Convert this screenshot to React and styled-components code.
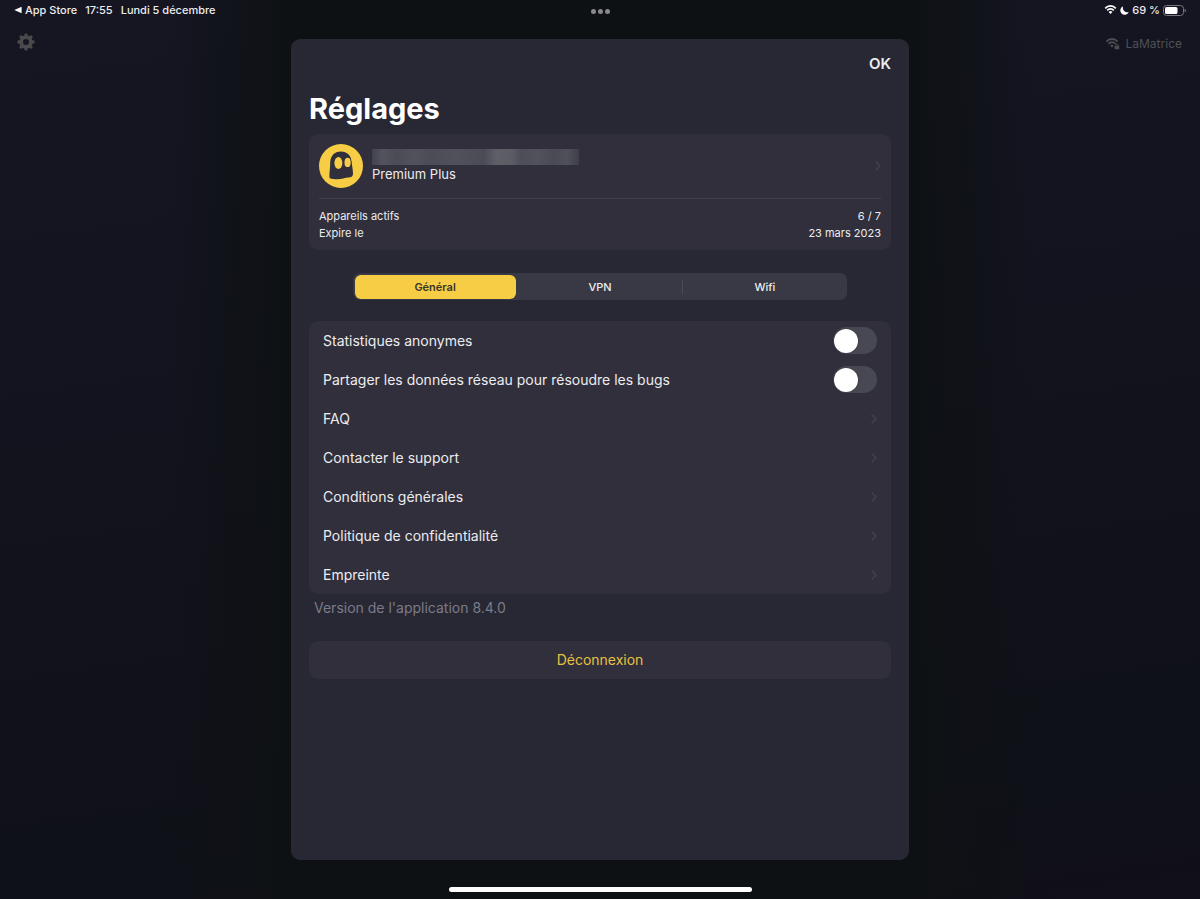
import React, { useState } from 'react';
import styled, { createGlobalStyle } from 'styled-components';

const GlobalStyle = createGlobalStyle`
  * {
    box-sizing: border-box;
  }
  body {
    margin: 0;
    background: #10111b;
    color: #ececef;
    font-family: Inter, 'Liberation Sans', sans-serif;
  }
  button {
    border: none;
    padding: 0;
    background: none;
    color: inherit;
    font: inherit;
    cursor: pointer;
  }
`;

const Screen = styled.div`
  display: flex;
  flex-direction: column;
  min-height: 100vh;
  background:
    linear-gradient(90deg, transparent 14%, #0e1114 24%, #0e1114 76%, transparent 86%),
    linear-gradient(172deg, #151622 0%, #12131d 45%, #11111a 70%, #0e1118 85%, #110f18 100%);
`;

const StatusBar = styled.header`
  display: grid;
  grid-template-columns: 1fr auto 1fr;
  align-items: center;
  height: 20px;
  padding: 0 14px;
  font-size: 11px;
  font-weight: 500;
  line-height: 14px;
`;

const StatusLeft = styled.div`
  display: flex;
  align-items: center;
  gap: 8px;
`;

const StatusRight = styled.div`
  display: flex;
  align-items: center;
  justify-content: flex-end;
  gap: 3px;
`;

const BackLink = styled.a`
  display: flex;
  align-items: center;
  gap: 3px;
  color: inherit;
  text-decoration: none;
`;

const Dots = styled.button`
  display: flex;
  gap: 2px;
  padding-top: 2px;
`;

const Dot = styled.span`
  width: 5px;
  height: 5px;
  border-radius: 50%;
  background: #89898d;
`;

const Main = styled.main`
  flex: 1;
  display: grid;
  grid-template-columns: 1fr minmax(0, 618px) 1fr;
  padding-top: 19px;
`;

const SideLeft = styled.div`
  display: flex;
  align-items: flex-start;
  padding: 0 17px;
`;

const GearButton = styled.button`
  display: flex;
  margin-top: -6px;
`;

const SideRight = styled.div`
  display: flex;
  align-items: flex-start;
  justify-content: flex-end;
  padding: 0 18px;
`;

const Network = styled.div`
  display: flex;
  align-items: center;
  gap: 6px;
  margin-top: -3px;
  color: #505057;
  font-size: 12px;
  line-height: 16px;
`;

const Panel = styled.section`
  display: flex;
  flex-direction: column;
  padding: 15px 18px;
  border-radius: 9px;
  background: #272834;
`;

const OkButton = styled.button`
  align-self: flex-end;
  font-size: 15px;
  font-weight: 600;
  line-height: 20px;
`;

const Title = styled.h1`
  margin: 17px 0 7px;
  color: #fff;
  font-size: 29px;
  font-weight: 700;
  line-height: 36px;
`;

const Card = styled.div`
  border-radius: 9px;
  background: #302f3b;
`;

const AccountCard = styled(Card)`
  padding: 10px 10px 8px;
`;

const AccountLink = styled.a`
  display: flex;
  align-items: center;
  gap: 9px;
  padding-bottom: 10px;
  border-bottom: 1px solid #41414d;
  color: inherit;
  text-decoration: none;
`;

const AccountText = styled.div`
  flex: 1;
  font-size: 13px;
  line-height: 18px;
`;

const HiddenName = styled.div`
  width: 207px;
  height: 16px;
  background: linear-gradient(
    90deg,
    #42424c 0%,
    #53535d 5%,
    #4b4b55 12%,
    #52525d 20%,
    #4c4c57 28%,
    #51515b 40%,
    #4b4b56 54%,
    #5f5f68 60%,
    #5b5b65 68%,
    #4d4d58 72%,
    #52525d 80%,
    #4a4a54 88%,
    #50505a 94%,
    #3f3f49 100%
  );
`;

const Facts = styled.dl`
  margin: 9px 0 0;
`;

const Fact = styled.div`
  display: flex;
  justify-content: space-between;
  font-size: 11px;
  line-height: 17px;

  dd {
    margin: 0;
  }
`;

const Segments = styled.div`
  display: grid;
  grid-template-columns: repeat(3, 1fr);
  align-self: center;
  align-items: center;
  width: 85%;
  height: 27px;
  margin: 23px 0 21px;
  border-radius: 7px;
  background: #393945;
`;

const SegmentCell = styled.div`
  display: flex;
  align-items: center;
  height: 15px;
  padding: 0 2px 0 1px;
  border-left: 1px solid ${({ $divided }) => ($divided ? '#4b4a56' : 'transparent')};
`;

const Segment = styled.button`
  flex: 1;
  height: 24px;
  border-radius: 6px;
  background: ${({ $active }) => ($active ? '#f7cd46' : 'none')};
  color: ${({ $active }) => ($active ? '#3a3426' : '#ececef')};
  font-size: 11px;
  font-weight: ${({ $active }) => ($active ? 600 : 500)};
  line-height: 14px;
`;

const List = styled(Card)`
  display: flex;
  flex-direction: column;
`;

const Row = styled.div`
  display: flex;
  align-items: center;
  justify-content: space-between;
  height: 39px;
  padding: 0 14px;
  color: inherit;
  font-size: 14px;
  line-height: 20px;
  text-decoration: none;
`;

const Toggle = styled.input`
  display: flex;
  align-items: center;
  appearance: none;
  width: 44px;
  height: 27px;
  margin: 0;
  padding: 0 1px;
  border-radius: 14px;
  background: ${({ checked }) => (checked ? '#f7cd46' : '#484852')};
  cursor: pointer;

  &::before {
    content: '';
    width: 24px;
    height: 24px;
    margin-left: ${({ checked }) => (checked ? '18px' : '0')};
    border-radius: 50%;
    background: #fff;
    box-shadow: 0 0 2px rgba(0, 0, 0, 0.3);
  }
`;

const Version = styled.p`
  margin: 4px 5px 23px;
  color: #7c7b87;
  font-size: 14px;
  line-height: 20px;
`;

const LogoutButton = styled.button`
  height: 38px;
  border-radius: 9px;
  background: #302f3b;
  color: #e7c03f;
  font-size: 14px;
  line-height: 20px;
`;

const Footer = styled.footer`
  display: flex;
  justify-content: center;
  padding: 27px 0 7px;
`;

const HomeBar = styled.div`
  width: 303px;
  height: 5px;
  border-radius: 3px;
  background: #fff;
`;

const Chevron = () => (
  <svg width="6" height="10" viewBox="0 0 6 10" fill="none" stroke="#43434e" strokeWidth="1.4" strokeLinecap="round" strokeLinejoin="round">
    <path d="M1 1l4 4-4 4" />
  </svg>
);

const WifiArcs = () => (
  <>
    <path d="M0.6 3.7A7.8 7.8 0 0 1 12.4 3.7L11.2 4.9A6.2 6.2 0 0 0 1.8 4.9Z" />
    <path d="M2.6 5.8A5.1 5.1 0 0 1 10.4 5.8L9.2 7A3.5 3.5 0 0 0 3.8 7Z" />
  </>
);

const WifiIcon = () => (
  <svg width="13" height="10" viewBox="0 1 13 10" fill="#fff">
    <WifiArcs />
    <path d="M4.6 7.9A2.6 2.6 0 0 1 8.4 7.9L6.5 9.9Z" />
  </svg>
);

const LockedWifiIcon = () => (
  <svg width="15" height="12" viewBox="0 1 14 11" fill="#4c4c51">
    <WifiArcs />
    <path d="M4.8 8A2.6 2.6 0 0 1 8 7.8L6.5 9.9Z" />
    <rect x="8.4" y="6.6" width="5.6" height="5" fill="#151622" />
    <rect x="9" y="8.2" width="4.2" height="3.2" rx="0.5" />
    <path d="M10 8.4V7.6a1.1 1.1 0 0 1 2.2 0v0.8" fill="none" stroke="#4c4c51" strokeWidth="0.8" />
  </svg>
);

const MoonIcon = () => (
  <svg width="9" height="9" viewBox="0 0 9 9" fill="#fff">
    <path d="M3.1 0.3A4.4 4.4 0 1 0 8.8 6A4.5 4.5 0 0 1 3.1 0.3Z" />
  </svg>
);

const BatteryIcon = () => (
  <svg width="23" height="11" viewBox="0 0 23 11">
    <rect x="0.5" y="0.5" width="20" height="10" rx="3" fill="none" stroke="#77777d" />
    <rect x="2" y="2" width="12.5" height="7" rx="1.6" fill="#fff" />
    <path d="M21.6 3.7a1.9 1.9 0 0 1 0 3.6Z" fill="#77777d" />
  </svg>
);

const teeth = [0, 45, 90, 135, 180, 225, 270, 315];

const GearIcon = () => (
  <svg width="18" height="18" viewBox="0 0 18 18" fill="#4a4a4c">
    {teeth.map((angle) => (
      <path key={angle} d="M7 4L7.6 1Q7.8 0.4 8.3 0.4H9.7Q10.2 0.4 10.4 1L11 4Z" transform={`rotate(${angle} 9 9)`} />
    ))}
    <circle cx="9" cy="9" r="4.8" fill="none" stroke="#4a4a4c" strokeWidth="3.6" />
  </svg>
);

const GhostLogo = () => (
  <svg width="44" height="44" viewBox="0 0 44 44">
    <circle cx="22" cy="22" r="22" fill="#f7cd46" />
    <path
      d="M11.2 19C11.2 11.8 15.6 7.4 21.8 7.4C28.4 7.4 32 11.6 32.6 17.6C33 21.6 34 26 34 29.6C34 32.6 32.4 33.4 29.6 33.4C26 33.4 22.6 35.2 18.4 35.2C15.2 35.2 13 34.8 11.4 34.4C10.5 34.1 10.4 33.4 10.4 32.4C10.4 28 11.2 23.6 11.2 19Z"
      fill="#302f3b"
    />
    <ellipse cx="19.4" cy="19" rx="4" ry="6" fill="#f7cd46" />
    <ellipse cx="28.6" cy="18.4" rx="3.1" ry="4.7" fill="#f7cd46" />
  </svg>
);

const tabs = ['Général', 'VPN', 'Wifi'];

const links = [
  'FAQ',
  'Contacter le support',
  'Conditions générales',
  'Politique de confidentialité',
  'Empreinte',
];

const ToggleRow = ({ id, label }) => {
  const [on, setOn] = useState(false);
  return (
    <Row>
      <label htmlFor={id}>{label}</label>
      <Toggle id={id} type="checkbox" checked={on} onChange={() => setOn(!on)} />
    </Row>
  );
};

const App = () => {
  const [tab, setTab] = useState(0);
  return (
    <>
      <GlobalStyle />
      <Screen>
        <StatusBar>
          <StatusLeft>
            <BackLink href="#store">
              <svg width="8" height="8" viewBox="0 0 8 8" fill="#fff">
                <path d="M0.3 4L7.6 0.7V7.3Z" />
              </svg>
              App Store
            </BackLink>
            <span>17:55</span>
            <span>Lundi 5 décembre</span>
          </StatusLeft>
          <Dots aria-label="Multitâche">
            <Dot />
            <Dot />
            <Dot />
          </Dots>
          <StatusRight>
            <WifiIcon />
            <MoonIcon />
            <span>69 %</span>
            <BatteryIcon />
          </StatusRight>
        </StatusBar>
        <Main>
          <SideLeft>
            <GearButton aria-label="Réglages">
              <GearIcon />
            </GearButton>
          </SideLeft>
          <Panel>
            <OkButton>OK</OkButton>
            <Title>Réglages</Title>
            <AccountCard>
              <AccountLink href="#compte">
                <GhostLogo />
                <AccountText>
                  <HiddenName />
                  Premium Plus
                </AccountText>
                <Chevron />
              </AccountLink>
              <Facts>
                <Fact>
                  <dt>Appareils actifs</dt>
                  <dd>6 / 7</dd>
                </Fact>
                <Fact>
                  <dt>Expire le</dt>
                  <dd>23 mars 2023</dd>
                </Fact>
              </Facts>
            </AccountCard>
            <Segments>
              {tabs.map((name, i) => (
                <SegmentCell key={name} $divided={i > 0 && tab !== i && tab !== i - 1}>
                  <Segment $active={tab === i} aria-pressed={tab === i} onClick={() => setTab(i)}>
                    {name}
                  </Segment>
                </SegmentCell>
              ))}
            </Segments>
            <List>
              <ToggleRow id="stats" label="Statistiques anonymes" />
              <ToggleRow id="network" label="Partager les données réseau pour résoudre les bugs" />
              {links.map((name) => (
                <Row as="a" href="#" key={name}>
                  {name}
                  <Chevron />
                </Row>
              ))}
            </List>
            <Version>Version de l'application 8.4.0</Version>
            <LogoutButton>Déconnexion</LogoutButton>
          </Panel>
          <SideRight>
            <Network>
              <LockedWifiIcon />
              LaMatrice
            </Network>
          </SideRight>
        </Main>
        <Footer>
          <HomeBar />
        </Footer>
      </Screen>
    </>
  );
};

export default App;
